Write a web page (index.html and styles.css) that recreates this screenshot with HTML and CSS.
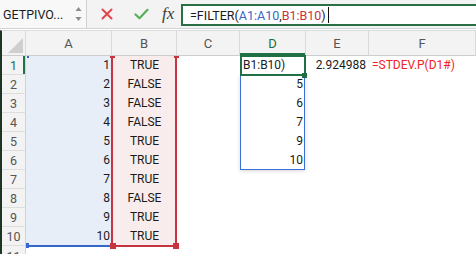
FILE: index.html
```html
<!DOCTYPE html>
<html>
<head>
<meta charset="utf-8">
<link rel="stylesheet" href="styles.css">
</head>
<body>
<div class="app">
  <div class="toolbar">
    <div class="namebox">
      <span class="name">GETPIVO...</span>
      <svg class="spin" width="7" height="16" viewBox="0 0 7 16"><path d="M3.5 1 L6.5 5 L0.5 5 Z" fill="#8c8c8c"/><path d="M0.5 11 L6.5 11 L3.5 15 Z" fill="#8c8c8c"/></svg>
    </div>
    <div class="actions">
      <svg class="ic-x" width="12" height="12" viewBox="0 0 12 12"><path d="M1.5 1.5 L10.5 10.5 M10.5 1.5 L1.5 10.5" stroke="#e0464c" stroke-width="2" stroke-linecap="round"/></svg>
      <svg class="ic-ok" width="15" height="12" viewBox="0 0 15 12"><path d="M1.5 6.5 L5.5 10.2 L13.5 1.8" stroke="#56b05a" stroke-width="2.2" fill="none" stroke-linecap="round" stroke-linejoin="round"/></svg>
      <span class="fx">fx</span>
    </div>
    <div class="formula">
      <span>=FILTER(</span><span class="ref-a">A1:A10</span><span>,</span><span class="ref-b">B1:B10</span><span>)</span><span class="caret"></span>
    </div>
  </div>

  <div class="sheet">
    <div class="grid">
      <div class="hd corner"><div class="tri"></div></div>
      <div class="hd">A</div>
      <div class="hd">B</div>
      <div class="hd">C</div>
      <div class="hd on">D</div>
      <div class="hd">E</div>
      <div class="hd">F</div>

      <div class="rh on">1</div><div class="c ca num">1</div><div class="c cb ctr">TRUE</div><div class="c"></div><div class="c left">B1:B10)</div><div class="c num">2.924988</div><div class="c left red">=STDEV.P(D1#)</div>
      <div class="rh">2</div><div class="c ca num">2</div><div class="c cb ctr">FALSE</div><div class="c"></div><div class="c num dv">5</div><div class="c"></div><div class="c"></div>
      <div class="rh">3</div><div class="c ca num">3</div><div class="c cb ctr">FALSE</div><div class="c"></div><div class="c num dv">6</div><div class="c"></div><div class="c"></div>
      <div class="rh">4</div><div class="c ca num">4</div><div class="c cb ctr">FALSE</div><div class="c"></div><div class="c num dv">7</div><div class="c"></div><div class="c"></div>
      <div class="rh">5</div><div class="c ca num">5</div><div class="c cb ctr">TRUE</div><div class="c"></div><div class="c num dv">9</div><div class="c"></div><div class="c"></div>
      <div class="rh">6</div><div class="c ca num">6</div><div class="c cb ctr">TRUE</div><div class="c"></div><div class="c num dv">10</div><div class="c"></div><div class="c"></div>
      <div class="rh">7</div><div class="c ca num">7</div><div class="c cb ctr">TRUE</div><div class="c"></div><div class="c"></div><div class="c"></div><div class="c"></div>
      <div class="rh">8</div><div class="c ca num">8</div><div class="c cb ctr">FALSE</div><div class="c"></div><div class="c"></div><div class="c"></div><div class="c"></div>
      <div class="rh">9</div><div class="c ca num">9</div><div class="c cb ctr">TRUE</div><div class="c"></div><div class="c"></div><div class="c"></div><div class="c"></div>
      <div class="rh">10</div><div class="c ca num">10</div><div class="c cb ctr">TRUE</div><div class="c"></div><div class="c"></div><div class="c"></div><div class="c"></div>
      <div class="rh r11">11</div><div class="c"></div><div class="c"></div><div class="c"></div><div class="c"></div><div class="c"></div><div class="c"></div>

      <div class="rng-a"><i class="h a-tl"></i><i class="h a-bl"></i></div>
      <div class="rng-b"><i class="h b-tl"></i><i class="h b-tr"></i><i class="h b-bl"></i><i class="h b-br"></i></div>
      <div class="spill"></div>
      <div class="cur"><i class="h g-br"></i></div>
    </div>
  </div>
</div>
</body>
</html>
```

FILE: styles.css
```css
* { box-sizing: border-box; }
html, body { margin: 0; padding: 0; }
body {
  width: 476px;
  height: 254px;
  overflow: hidden;
  background: #ffffff;
  font-family: Roboto, "Liberation Sans", sans-serif;
  color: #1b1b1b;
}
.app { display: flex; flex-direction: column; height: 254px; }

/* toolbar */
.toolbar {
  height: 29px;
  display: flex;
  align-items: flex-start;
  background: #f3f3f3;
  border-bottom: 1px solid #d3d3d3;
}
.namebox {
  flex: 0 0 87px;
  height: 28px;
  display: flex;
  align-items: center;
  justify-content: space-between;
  padding: 0 4px 0 3px;
  background: #f8f8f8;
  border-right: 1px solid #d0d0d0;
  font-size: 12.5px;
  color: #1b1b1b;
}
.spin { display: block; }
.actions {
  flex: 0 0 94px;
  height: 28px;
  display: flex;
  align-items: center;
  padding-left: 14px;
}
.ic-x { display: block; flex: none; }
.ic-ok { display: block; flex: none; margin-left: 21px; }
.fx {
  flex: none;
  margin-left: 13px;
  font-family: "Liberation Serif", serif;
  font-style: italic;
  font-size: 17px;
  color: #3c3c3c;
  line-height: 1;
  margin-top: -2px;
}
.formula {
  flex: 1;
  height: 22px;
  margin-top: 4px;
  border: 2px solid #2a6f45;
  border-right: none;
  background: #ffffff;
  display: flex;
  align-items: center;
  padding-left: 7px;
  font-size: 12.5px;
  color: #1b1b1b;
  white-space: pre;
}
.ref-a { color: #3867c9; }
.ref-b { color: #c5323d; }
.caret { width: 1px; height: 16px; background: #111; margin-left: 2px; }

/* sheet */
.sheet {
  margin-top: 1px;
  border-top: 1px solid #dcdcdc;
  border-left: 2px solid #1f3524;
  flex: 1;
  overflow: hidden;
}
.grid {
  position: relative;
  display: grid;
  grid-template-columns: 24px 86px 65px 63px 66px 63px 1fr;
  grid-template-rows: 25px repeat(11, 19px);
}
.hd {
  background: #f3f3f3;
  border-right: 1px solid #d9d9d9;
  border-bottom: 1px solid #cdcdcd;
  display: flex;
  align-items: center;
  justify-content: center;
  font-size: 13px;
  color: #555555;
}
.hd.on { color: #1e6e40; box-shadow: inset 0 -2px 0 #217346; }
.corner { align-items: flex-end; justify-content: flex-end; padding: 0 2px 2px 0; }
.tri {
  width: 15px;
  height: 15px;
  background: #cfcfcf;
  clip-path: polygon(100% 0, 100% 100%, 0 100%);
}
.rh {
  background: #f3f3f3;
  border-right: 1px solid #d2d2d2;
  border-bottom: 1px solid #dedede;
  display: flex;
  align-items: center;
  justify-content: center;
  font-size: 12.5px;
  color: #555555;
}
.rh.r11 { align-items: flex-start; padding-top: 3px; }
.rh.on { color: #1e6e40; box-shadow: inset -2px 0 0 #217346; }

.c {
  font-size: 12px;
  line-height: 19px;
  padding: 0 3px;
  white-space: nowrap;
  color: #1b1b1b;
}
.num { text-align: right; }
.ctr { text-align: center; }
.left { text-align: left; }
.red { color: #f02424; }
.ca { background: #e8eef8; padding-right: 2px; }
.cb { background: #f9ecec; }
.dv { padding-right: 3px; }

/* range overlays */
.rng-a, .rng-b, .spill, .cur { position: absolute; pointer-events: none; }
.rng-a {
  grid-column: 2 / 3;
  grid-row: 2 / 12;
  top: 0; bottom: -1px; left: 0; right: 0;
  border-bottom: 2px solid #3568cf;
}
.rng-b {
  grid-column: 3 / 4;
  grid-row: 2 / 12;
  top: 0; bottom: -1px; left: -1px; right: 0;
  border: 2px solid #c7343e;
  border-top: none;
}
.spill {
  grid-column: 5 / 6;
  grid-row: 3 / 8;
  top: 0; bottom: 0; left: 0; right: 1px;
  border: 1px solid #3a6fd6;
  border-top: none;
  box-shadow: 0 1px 4px rgba(0, 0, 0, 0.16);
}
.cur {
  grid-column: 5 / 6;
  grid-row: 2 / 3;
  top: -1px; bottom: -1px; left: 0; right: 0;
  border: 2px solid #1f7145;
}
.h { position: absolute; display: block; }
.a-tl { left: 1px; top: 0; width: 2px; height: 2px; background: #3568cf; }
.a-bl { left: 0; bottom: -3px; width: 3px; height: 5px; background: #3568cf; }
.b-tl { left: -3px; top: 0; width: 5px; height: 2px; background: #c7343e; }
.b-tr { right: -4px; top: 0; width: 5px; height: 2px; background: #c7343e; }
.b-bl { left: -3px; bottom: -4px; width: 6px; height: 6px; background: #c7343e; }
.b-br { right: -4px; bottom: -4px; width: 6px; height: 6px; background: #c7343e; }
.g-br { right: -3px; bottom: -4px; width: 5px; height: 5px; background: #1f7145; }
```
